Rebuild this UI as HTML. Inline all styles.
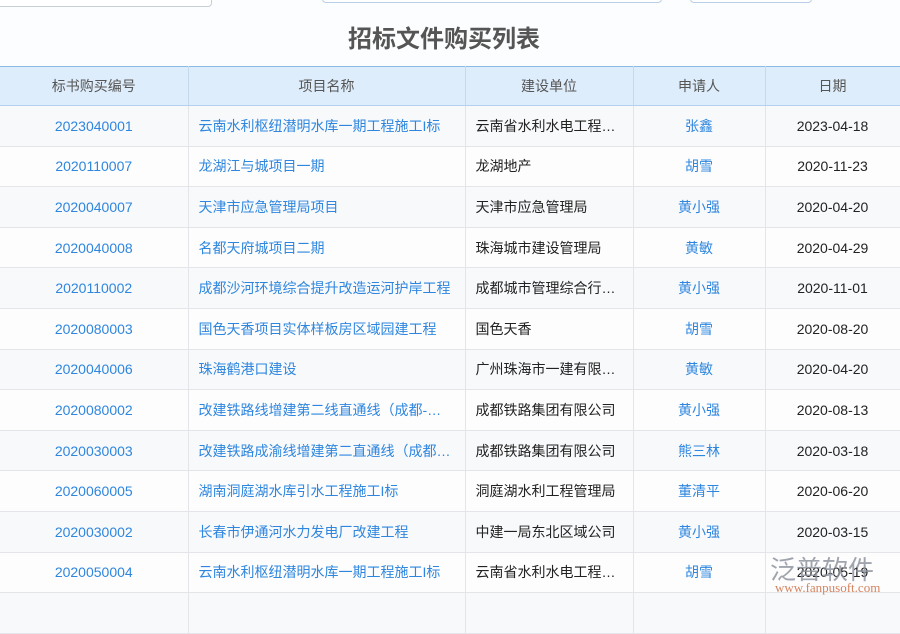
<!DOCTYPE html>
<html><head><meta charset="utf-8"><style>
body{margin:0;width:900px;height:600px;overflow:hidden;background:#fcfdfe;font-family:"Liberation Sans","Noto Sans CJK SC",sans-serif;position:relative}
.b1{position:absolute;left:-5px;top:-10px;width:215px;height:15px;border:1px solid #c8ccd4;border-radius:4px;background:#fff}
.b2{position:absolute;left:322px;top:-10px;width:338px;height:11px;border:1px solid #b9cfe6;border-radius:4px;background:#fff}
.b3{position:absolute;left:690px;top:-10px;width:120px;height:11px;border:1px solid #b9cfe6;border-radius:4px;background:#fff}
h1{position:absolute;top:25px;left:0;width:888px;text-align:center;margin:0;font-size:24px;color:#555;font-weight:bold;line-height:30px}
table{position:absolute;top:66px;left:0;border-collapse:collapse;width:900px;table-layout:fixed;font-size:14px}
th{height:38px;padding:0;line-height:20px;background:#deedfb;color:#555;font-weight:normal;border-top:1px solid #8ab9e6;border-bottom:1px solid #b3d1ef;border-right:1px solid #c5d9ec}
td{height:39.6px;line-height:20px;border-bottom:1px solid #e3e5e8;border-right:1px solid #e3e5e8;text-align:center;color:#222;white-space:nowrap;overflow:hidden;text-overflow:ellipsis;padding:0 10px}
td span{display:inline-block;vertical-align:middle;height:20px;line-height:20px}
td.l{text-align:left}
td.a{color:#2e86de}
tr:nth-child(even) td{background:#f8f9fb}
tr:nth-child(odd) td{background:#fdfdfe}
.wm{position:absolute;left:770px;top:550px;color:#8a8f9a;font-size:26px;opacity:.8}
.wm2{position:absolute;left:775px;top:580px;color:#d4835f;font-size:13px;font-family:"Liberation Serif",serif}
</style></head><body>
<div class="b1"></div><div class="b2"></div><div class="b3"></div>
<h1>招标文件购买列表</h1>
<table>
<colgroup><col style="width:188px"><col style="width:277px"><col style="width:168px"><col style="width:132px"><col style="width:135px"></colgroup>
<tr><th>标书购买编号</th><th>项目名称</th><th>建设单位</th><th>申请人</th><th>日期</th></tr>
<tr><td class="a">2023040001</td><td class="l a">云南水利枢纽潜明水库一期工程施工I标</td><td class="l">云南省水利水电工程有限公司</td><td class="a">张鑫</td><td>2023-04-18</td></tr>
<tr><td class="a">2020110007</td><td class="l a">龙湖江与城项目一期</td><td class="l">龙湖地产</td><td class="a">胡雪</td><td>2020-11-23</td></tr>
<tr><td class="a">2020040007</td><td class="l a">天津市应急管理局项目</td><td class="l">天津市应急管理局</td><td class="a">黄小强</td><td>2020-04-20</td></tr>
<tr><td class="a">2020040008</td><td class="l a">名都天府城项目二期</td><td class="l">珠海城市建设管理局</td><td class="a">黄敏</td><td>2020-04-29</td></tr>
<tr><td class="a">2020110002</td><td class="l a">成都沙河环境综合提升改造运河护岸工程</td><td class="l">成都城市管理综合行政执法局</td><td class="a">黄小强</td><td>2020-11-01</td></tr>
<tr><td class="a">2020080003</td><td class="l a">国色天香项目实体样板房区域园建工程</td><td class="l">国色天香</td><td class="a">胡雪</td><td>2020-08-20</td></tr>
<tr><td class="a">2020040006</td><td class="l a">珠海鹤港口建设</td><td class="l">广州珠海市一建有限公司</td><td class="a">黄敏</td><td>2020-04-20</td></tr>
<tr><td class="a">2020080002</td><td class="l a">改建铁路线增建第二线直通线（成都-西安）</td><td class="l">成都铁路集团有限公司</td><td class="a">黄小强</td><td>2020-08-13</td></tr>
<tr><td class="a">2020030003</td><td class="l a">改建铁路成渝线增建第二直通线（成都-重庆）</td><td class="l">成都铁路集团有限公司</td><td class="a">熊三林</td><td>2020-03-18</td></tr>
<tr><td class="a">2020060005</td><td class="l a">湖南洞庭湖水库引水工程施工I标</td><td class="l">洞庭湖水利工程管理局</td><td class="a">董清平</td><td>2020-06-20</td></tr>
<tr><td class="a">2020030002</td><td class="l a">长春市伊通河水力发电厂改建工程</td><td class="l">中建一局东北区域公司</td><td class="a">黄小强</td><td>2020-03-15</td></tr>
<tr><td class="a">2020050004</td><td class="l a">云南水利枢纽潜明水库一期工程施工I标</td><td class="l">云南省水利水电工程有限公司</td><td class="a">胡雪</td><td>2020-05-19</td></tr>
<tr><td></td><td></td><td></td><td></td><td></td></tr>
</table>
<div class="wm">泛普软件</div>
<div class="wm2">www.fanpusoft.com</div>
</body></html>
